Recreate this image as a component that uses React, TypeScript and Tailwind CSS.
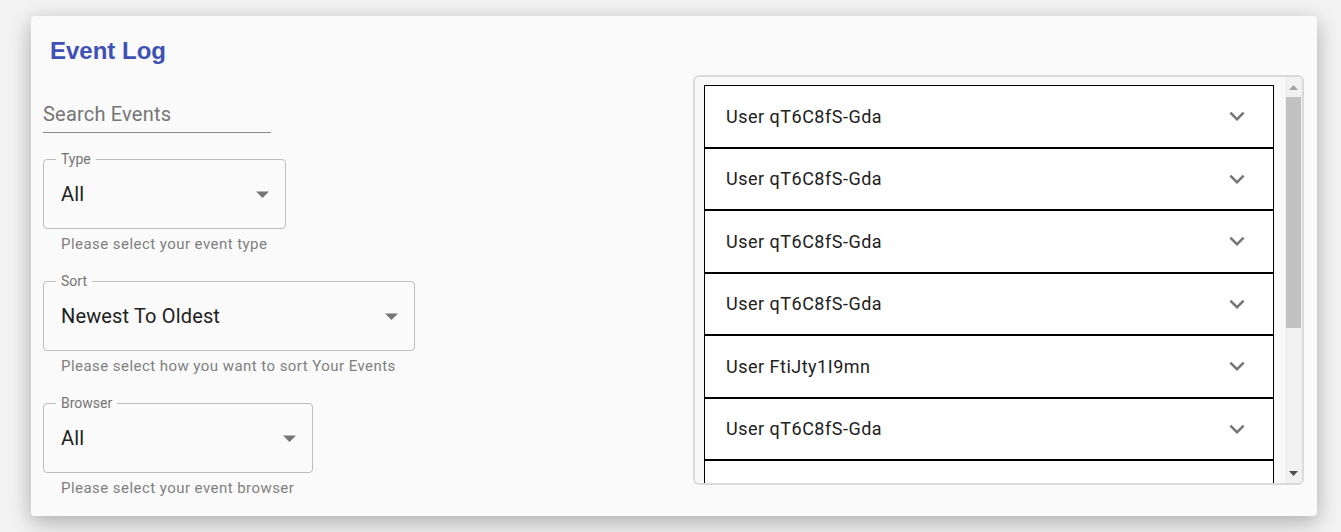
import * as React from "react";

const events = [
  "User qT6C8fS-Gda",
  "User qT6C8fS-Gda",
  "User qT6C8fS-Gda",
  "User qT6C8fS-Gda",
  "User FtiJty1I9mn",
  "User qT6C8fS-Gda",
  "User wIO6xdkTz9a",
];

const ArrowDrop = () => (
  <svg width="13" height="7" viewBox="0 0 13 7" className="shrink-0">
    <path d="M0 0.5 L13 0.5 L6.5 7 Z" fill="#757575" />
  </svg>
);

const ExpandMore = () => (
  <svg width="30" height="30" viewBox="0 0 24 24" className="shrink-0">
    <path
      d="M16.59 8.59 12 13.17 7.41 8.59 6 10l6 6 6-6z"
      fill="#757575"
    />
  </svg>
);

type SelectProps = {
  label: string;
  value: string;
  helper: string;
  width: string;
};

const OutlinedSelect = ({ label, value, helper, width }: SelectProps) => {
  return (
    <div>
      <fieldset
        className={`${width} border border-[#bdbdbd] rounded-[4px] px-[12px] cursor-pointer`}
      >
        <legend className="px-[5px] text-[14px] leading-[16px] text-[#757575]">
          {label}
        </legend>
        <div className="flex items-center justify-between pl-[5px] pr-[4px] pt-[15px] pb-[22px]">
          <span className="text-[20px] leading-[24px] tracking-[0.15px] text-[#212121]">
            {value}
          </span>
          <ArrowDrop />
        </div>
      </fieldset>
      <p className="mt-[5px] pl-[18px] text-[15px] leading-[20px] tracking-[0.45px] text-[#808080]">
        {helper}
      </p>
    </div>
  );
};

const EventItem = ({ title }: { title: string }) => (
  <div className="h-[62.5px] shrink-0 bg-white border border-black flex items-center justify-between pl-[21px] pr-[21px] cursor-pointer">
    <span className="text-[18px] tracking-[0.5px] text-[#212121]">{title}</span>
    <ExpandMore />
  </div>
);

const FakeScrollbar = () => (
  <div className="w-[17px] shrink-0 bg-[#f1f1f1] flex flex-col items-center">
    <div className="h-[20px] flex items-center justify-center">
      <svg width="9" height="5" viewBox="0 0 9 5">
        <path d="M0 5 L4.5 0 L9 5 Z" fill="#a3a3a3" />
      </svg>
    </div>
    <div className="w-[15px] h-[231px] bg-[#c1c1c1]" />
    <div className="flex-1" />
    <div className="h-[20px] flex items-center justify-center">
      <svg width="9" height="5" viewBox="0 0 9 5">
        <path d="M0 0 L9 0 L4.5 5 Z" fill="#505050" />
      </svg>
    </div>
  </div>
);

const App = () => {
  const [search, setSearch] = React.useState("");

  return (
    <div
      className="min-h-screen bg-[#f3f3f3] pt-[16px] pl-[31px] pr-[24px] pb-[16px]"
      style={{ fontFamily: "Roboto, 'Noto Sans', sans-serif" }}
    >
      <div className="h-[500px] bg-[#fafafa] rounded-[4px] shadow-[0_6px_22px_rgba(0,0,0,0.3)] p-[12px] pr-[13px]">
        <h2
          className="mt-[7px] pl-[7px] text-[24px] leading-[32px] font-bold text-[#3f51b5]"
          style={{ fontFamily: "'Liberation Sans', Arial, sans-serif" }}
        >
          Event Log
        </h2>

        <div className="mt-[8px] flex">
          <div className="flex-1 flex flex-col">
            <input
              value={search}
              onChange={(e) => setSearch(e.target.value)}
              placeholder="Search Events"
              className="mt-[26px] w-[228px] h-[32px] pb-[7px] pt-[1px] bg-transparent border-b border-[#8a8a8a] text-[20px] leading-[24px] tracking-[0.2px] text-[#212121] placeholder:text-[#757575] outline-none"
            />
            <div className="mt-[18px]">
              <OutlinedSelect
                label="Type"
                value="All"
                helper="Please select your event type"
                width="w-[243px]"
              />
            </div>
            <div className="mt-[19px]">
              <OutlinedSelect
                label="Sort"
                value="Newest To Oldest"
                helper="Please select how you want to sort Your Events"
                width="w-[372px]"
              />
            </div>
            <div className="mt-[19px]">
              <OutlinedSelect
                label="Browser"
                value="All"
                helper="Please select your event browser"
                width="w-[270px]"
              />
            </div>
          </div>

          <div className="w-[611px] h-[410px] shrink-0 border-2 border-[#dadada] rounded-[6px] bg-[#f9f9f9] flex overflow-hidden">
            <div className="flex-1 flex flex-col overflow-hidden pt-[8px] pl-[9px] pr-[11px]">
              {events.map((ev, i) => (
                <EventItem key={i} title={ev} />
              ))}
            </div>
            <FakeScrollbar />
          </div>
        </div>
      </div>
    </div>
  );
};

export default App;
